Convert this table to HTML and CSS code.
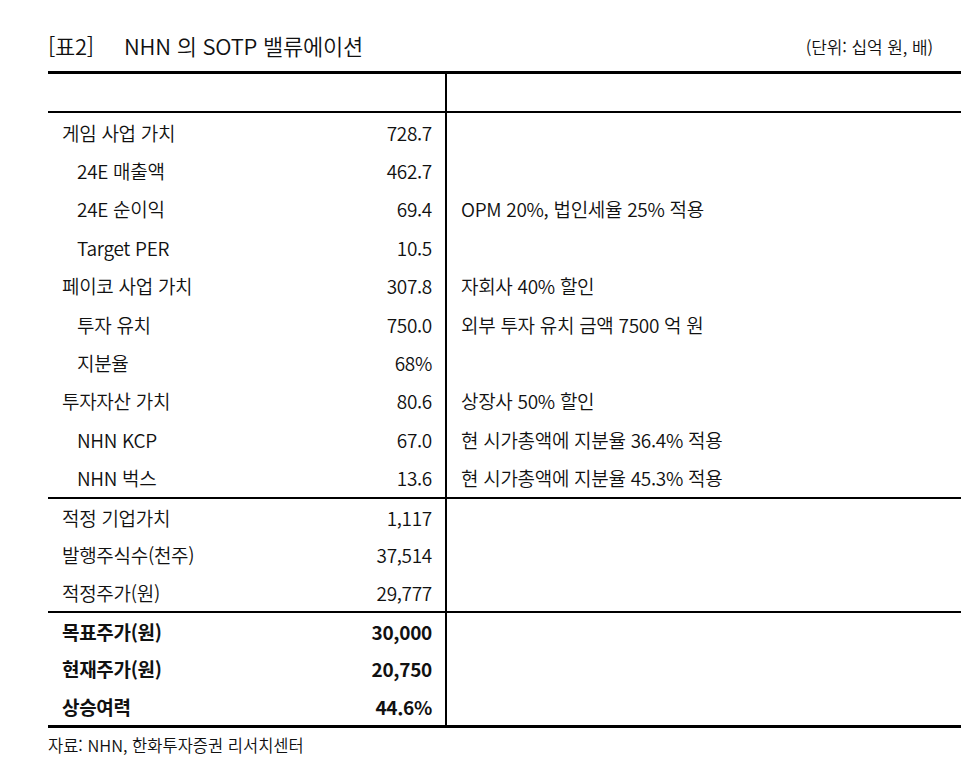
FILE: index.html
```html
<!DOCTYPE html>
<html lang="ko">
<head>
<meta charset="utf-8">
<title>NHN SOTP</title>
<link rel="stylesheet" href="styles.css">
</head>
<body>
<div class="page">
  <div class="head">
    <div class="title"><span class="tag">[표2]</span><span class="name">NHN 의 SOTP 밸류에이션</span></div>
    <div class="unit">(단위: 십억 원, 배)</div>
  </div>
  <div class="table">
    <div class="row hdr"><div class="c1"></div><div class="c2"></div></div>
    <div class="sec s1">
      <div class="row"><div class="c1"><span class="lbl">게임 사업 가치</span><span class="val">728.7</span></div><div class="c2"></div></div>
      <div class="row"><div class="c1"><span class="lbl ind">24E 매출액</span><span class="val">462.7</span></div><div class="c2"></div></div>
      <div class="row"><div class="c1"><span class="lbl ind">24E 순이익</span><span class="val">69.4</span></div><div class="c2">OPM 20%, 법인세율 25% 적용</div></div>
      <div class="row"><div class="c1"><span class="lbl ind">Target PER</span><span class="val">10.5</span></div><div class="c2"></div></div>
      <div class="row"><div class="c1"><span class="lbl">페이코 사업 가치</span><span class="val">307.8</span></div><div class="c2">자회사 40% 할인</div></div>
      <div class="row"><div class="c1"><span class="lbl ind">투자 유치</span><span class="val">750.0</span></div><div class="c2">외부 투자 유치 금액 7500 억 원</div></div>
      <div class="row"><div class="c1"><span class="lbl ind">지분율</span><span class="val">68%</span></div><div class="c2"></div></div>
      <div class="row"><div class="c1"><span class="lbl">투자자산 가치</span><span class="val">80.6</span></div><div class="c2">상장사 50% 할인</div></div>
      <div class="row"><div class="c1"><span class="lbl ind">NHN KCP</span><span class="val">67.0</span></div><div class="c2">현 시가총액에 지분율 36.4% 적용</div></div>
      <div class="row"><div class="c1"><span class="lbl ind">NHN 벅스</span><span class="val">13.6</span></div><div class="c2">현 시가총액에 지분율 45.3% 적용</div></div>
    </div>
    <div class="sec s2">
      <div class="row"><div class="c1"><span class="lbl">적정 기업가치</span><span class="val">1,117</span></div><div class="c2"></div></div>
      <div class="row"><div class="c1"><span class="lbl">발행주식수(천주)</span><span class="val">37,514</span></div><div class="c2"></div></div>
      <div class="row"><div class="c1"><span class="lbl">적정주가(원)</span><span class="val">29,777</span></div><div class="c2"></div></div>
    </div>
    <div class="sec s3">
      <div class="row"><div class="c1"><span class="lbl">목표주가(원)</span><span class="val">30,000</span></div><div class="c2"></div></div>
      <div class="row"><div class="c1"><span class="lbl">현재주가(원)</span><span class="val">20,750</span></div><div class="c2"></div></div>
      <div class="row"><div class="c1"><span class="lbl">상승여력</span><span class="val">44.6%</span></div><div class="c2"></div></div>
    </div>
  </div>
  <div class="foot">자료: NHN, 한화투자증권 리서치센터</div>
</div>
</body>
</html>
```

FILE: styles.css
```css
html, body {
  margin: 0;
  padding: 0;
  background: #ffffff;
}
body {
  font-family: "Noto Sans CJK KR", "Noto Sans", sans-serif;
  font-weight: 350;
  color: #111111;
}
.page {
  width: 913px;
  margin-left: 48px;
}
.head {
  box-sizing: border-box;
  height: 71px;
  padding-top: 19px;
  display: flex;
  align-items: center;
  justify-content: space-between;
}
.title {
  font-size: 22px;
  letter-spacing: -0.25px;
  line-height: 30px;
  display: flex;
  white-space: nowrap;
}
.tag {
  width: 76px;
}
.unit {
  font-size: 17px;
  letter-spacing: -0.1px;
  line-height: 24px;
  margin-right: 28px;
  margin-top: 4px;
}
.table {
  border-top: 3px solid #000;
  border-bottom: 3px solid #000;
}
.row {
  display: flex;
  height: 38.4px;
  font-size: 19px;
  letter-spacing: -0.3px;
}
.hdr {
  height: 37px;
}
.sec {
  border-top: 2px solid #000;
}
.s2 .row, .s3 .row {
  height: 37.33px;
}
.s3 {
  font-weight: 700;
}
.c1 {
  width: 397px;
  display: flex;
  align-items: center;
  justify-content: space-between;
  padding: 0 13px 0 14px;
  box-sizing: border-box;
}
.c2 {
  flex: 1;
  border-left: 2px solid #000;
  display: flex;
  align-items: center;
  padding-left: 14px;
}
.lbl.ind {
  padding-left: 15px;
}
.val {
  text-align: right;
}
.foot {
  margin-top: 5px;
  font-size: 16.5px;
  letter-spacing: 0;
  line-height: 24px;
}
```
